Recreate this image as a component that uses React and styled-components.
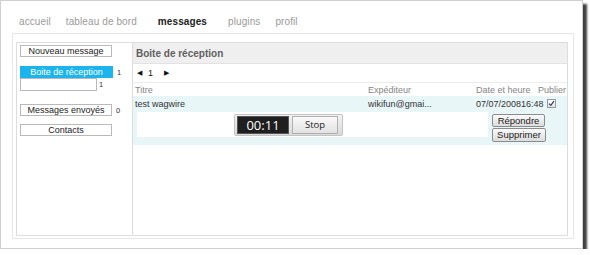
import React from "react";
import styled, { createGlobalStyle } from "styled-components";

const GlobalStyle = createGlobalStyle`
  html, body {
    margin: 0;
    padding: 0;
    background: #ffffff;
  }
  body {
    font-family: "Liberation Sans", Arial, sans-serif;
  }
`;

const Frame = styled.div`
  box-sizing: border-box;
  width: 583px;
  height: 249px;
  background: #ffffff;
  border: 1px solid #cfcfcf;
  box-shadow: 4px 4px 2px rgba(0, 0, 0, 0.75);
`;

const TopNav = styled.nav`
  display: flex;
  align-items: flex-end;
  gap: 15px;
  height: 32px;
  padding: 0 0 5px 18px;
  box-sizing: border-box;
`;

const NavLink = styled.span`
  font-size: 10px;
  line-height: 12px;
  letter-spacing: 0.1px;
  color: ${(p) => (p.$active ? "#222222" : "#9a9a9a")};
  font-weight: ${(p) => (p.$active ? "bold" : "normal")};
  margin: ${(p) => (p.$active ? "0 6px" : "0")};
`;

const OuterBox = styled.div`
  box-sizing: border-box;
  width: 562px;
  height: 206px;
  margin-left: 11px;
  padding: 8px 5px 2px 3px;
  border: 1px solid #e6e6e6;
`;

const Panels = styled.div`
  box-sizing: border-box;
  display: flex;
  height: 100%;
  border: 1px solid #dddddd;
`;

const Sidebar = styled.aside`
  box-sizing: border-box;
  width: 116px;
  flex: none;
  padding: 2px 0 0 3px;
  border-right: 1px solid #dddddd;
  display: flex;
  flex-direction: column;
`;

const SideRow = styled.div`
  display: flex;
  align-items: center;
  gap: ${(p) => p.$gap || 4}px;
  margin-top: ${(p) => p.$top || 0}px;
`;

const SideButton = styled.div`
  box-sizing: border-box;
  width: ${(p) => p.$width || 92}px;
  height: ${(p) => p.$height || 12}px;
  border: 1px solid ${(p) => (p.$active ? "#1cb4ec" : "#b9b9b9")};
  background: ${(p) => (p.$active ? "#1cb4ec" : "#ffffff")};
  color: ${(p) => (p.$active ? "#ffffff" : "#222222")};
  font-size: 9px;
  line-height: 10px;
  text-align: center;
  white-space: nowrap;
`;

const Count = styled.span`
  font-size: 7.5px;
  color: #333333;
`;

const Main = styled.section`
  flex: 1;
  display: flex;
  flex-direction: column;
  min-width: 0;
`;

const PanelHeader = styled.div`
  height: 20px;
  background: #efefef;
  border-bottom: 1px solid #e2e2e2;
  display: flex;
  align-items: center;
  padding-left: 3px;
  font-size: 10px;
  font-weight: bold;
  color: #5f5f5f;
`;

const Pager = styled.div`
  height: 18px;
  border-bottom: 1px solid #ececec;
  display: flex;
  align-items: center;
  padding-left: 4px;
  font-size: 9px;
  color: #222222;
`;

const PagerArrow = styled.span`
  font-size: 7px;
  color: #111111;
  margin-right: ${(p) => p.$right || 0}px;
  margin-left: ${(p) => p.$left || 0}px;
`;

const Grid = styled.div`
  display: grid;
  grid-template-columns: 233px 108px 62px 1fr;
  align-items: center;
  padding-left: 2px;
  height: ${(p) => p.$height}px;
  font-size: 9px;
  color: ${(p) => p.$color || "#333333"};
`;

const MessageBlock = styled.div`
  background: #e9f6f8;
  height: 49px;
  display: flex;
  flex-direction: column;
`;

const Check = styled.span`
  box-sizing: border-box;
  display: inline-flex;
  align-items: center;
  justify-content: center;
  width: 9px;
  height: 9px;
  margin-left: 9px;
  border: 1px solid #9a9a9a;
  background: linear-gradient(#ffffff, #e4e4e4);
`;

const Detail = styled.div`
  display: flex;
  gap: 4px;
  padding: 1px 0 0 4px;
`;

const PlayerCell = styled.div`
  box-sizing: border-box;
  width: 351px;
  height: 25px;
  background: #ffffff;
  padding: 2px 0 0 97px;
`;

const Player = styled.div`
  box-sizing: border-box;
  width: 109px;
  height: 22px;
  display: flex;
  align-items: center;
  gap: 3px;
  padding: 0 3px 0 2px;
  border: 1px solid #c4c4c4;
  border-radius: 2px;
  background: linear-gradient(#f2f2f2, #dadada);
`;

const Timer = styled.div`
  box-sizing: border-box;
  width: 52px;
  height: 18px;
  background: #1f1f1f;
  border: 1px solid #555555;
  color: #ffffff;
  font-family: "Open Sans", "DejaVu Sans", sans-serif;
  font-size: 13px;
  line-height: 16px;
  text-align: center;
`;

const StopButton = styled.div`
  box-sizing: border-box;
  width: 46px;
  height: 18px;
  border: 1px solid #b0b0b0;
  background: linear-gradient(#fafafa, #e2e2e2);
  color: #222222;
  font-family: "Open Sans", "DejaVu Sans", sans-serif;
  font-size: 9.5px;
  line-height: 16px;
  text-align: center;
`;

const Actions = styled.div`
  display: flex;
  flex-direction: column;
  gap: 1px;
  padding-top: 2px;
`;

const ActionButton = styled.div`
  box-sizing: border-box;
  width: ${(p) => p.$width}px;
  height: ${(p) => p.$height}px;
  border: 1px solid #8c8c8c;
  border-radius: 2px;
  background: linear-gradient(#fbfbfb, #dcdcdc);
  color: #222222;
  font-size: 9.5px;
  line-height: ${(p) => p.$height - 2}px;
  text-align: center;
`;

const navItems = [
  { label: "accueil" },
  { label: "tableau de bord" },
  { label: "messages", active: true },
  { label: "plugins" },
  { label: "profil" },
];

export default function App() {
  return (
    <>
      <GlobalStyle />
      <Frame>
        <TopNav>
          {navItems.map((n) => (
            <NavLink key={n.label} $active={n.active}>
              {n.label}
            </NavLink>
          ))}
        </TopNav>
        <OuterBox>
          <Panels>
            <Sidebar>
              <SideRow>
                <SideButton>Nouveau message</SideButton>
              </SideRow>
              <SideRow $top={9}>
                <SideButton $active $width={93}>
                  Boite de réception
                </SideButton>
                <Count>1</Count>
              </SideRow>
              <SideRow $gap={2}>
                <SideButton $width={77} $height={13} />
                <Count>1</Count>
              </SideRow>
              <SideRow $top={13}>
                <SideButton>Messages envoyés</SideButton>
                <Count>0</Count>
              </SideRow>
              <SideRow $top={8}>
                <SideButton>Contacts</SideButton>
              </SideRow>
            </Sidebar>
            <Main>
              <PanelHeader>Boite de réception</PanelHeader>
              <Pager>
                <PagerArrow $right={6}>◀</PagerArrow>
                <span>1</span>
                <PagerArrow $left={11}>▶</PagerArrow>
              </Pager>
              <Grid $height={13} $color="#858585">
                <span>Titre</span>
                <span>Expéditeur</span>
                <span>Date et heure</span>
                <span>Publier</span>
              </Grid>
              <MessageBlock>
                <Grid $height={15}>
                  <span>test wagwire</span>
                  <span>wikifun@gmai...</span>
                  <span>07/07/200816:48</span>
                  <span>
                    <Check>
                      <svg width="7" height="7" viewBox="0 0 7 7">
                        <path
                          d="M1 3.6 L2.8 5.4 L6 1.2"
                          fill="none"
                          stroke="#2a3f6a"
                          strokeWidth="1.2"
                        />
                      </svg>
                    </Check>
                  </span>
                </Grid>
                <Detail>
                  <PlayerCell>
                    <Player>
                      <Timer>00:11</Timer>
                      <StopButton>Stop</StopButton>
                    </Player>
                  </PlayerCell>
                  <Actions>
                    <ActionButton $width={53} $height={13}>
                      Répondre
                    </ActionButton>
                    <ActionButton $width={54} $height={14}>
                      Supprimer
                    </ActionButton>
                  </Actions>
                </Detail>
              </MessageBlock>
            </Main>
          </Panels>
        </OuterBox>
      </Frame>
    </>
  );
}
